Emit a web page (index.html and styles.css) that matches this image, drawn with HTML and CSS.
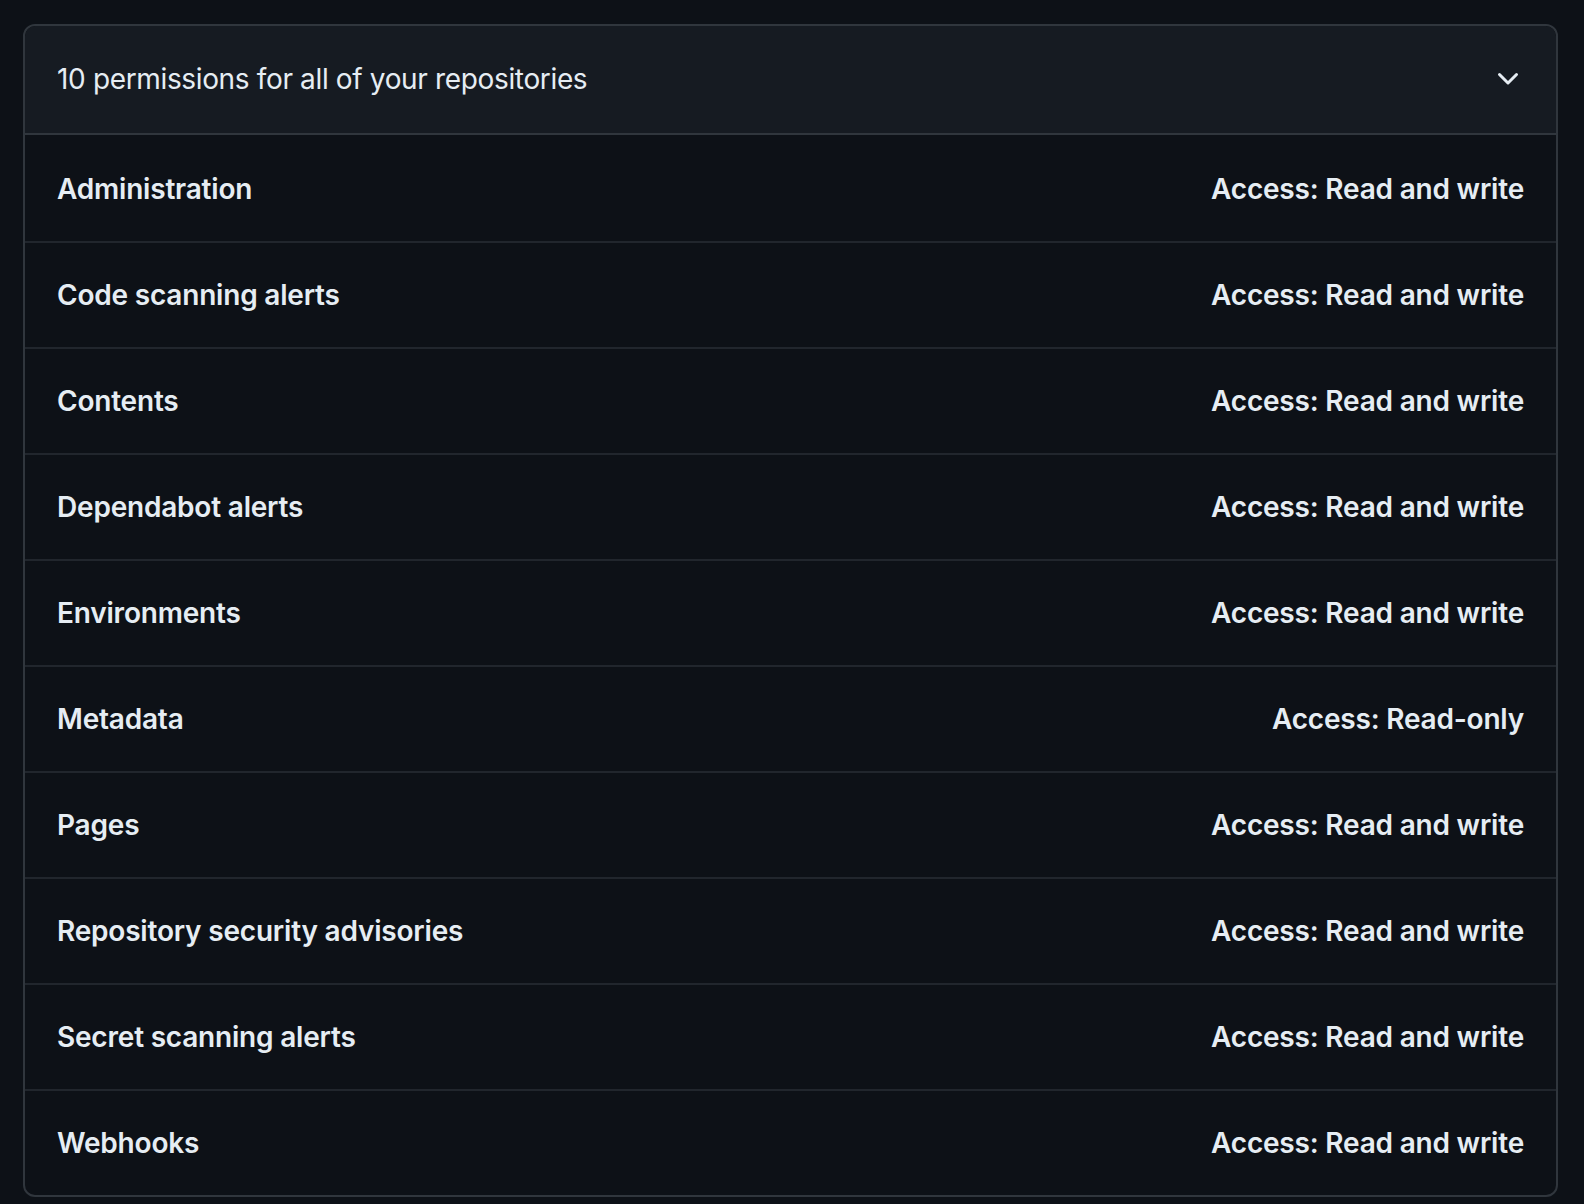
FILE: index.html
```html
<!DOCTYPE html>
<html lang="en">
<head>
<meta charset="utf-8">
<title>Permissions</title>
<link rel="stylesheet" href="styles.css">
</head>
<body>
<div class="box">
  <div class="box-header">
    <span class="header-title">10 permissions for all of your repositories</span>
    <svg class="chevron" viewBox="0 0 16 16" width="32" height="32" aria-hidden="true"><path fill="currentColor" d="M12.78 5.22a.749.749 0 0 1 0 1.06l-4.25 4.25a.749.749 0 0 1-1.06 0L3.22 6.28a.749.749 0 1 1 1.06-1.06L8 8.939l3.72-3.719a.749.749 0 0 1 1.06 0Z"/></svg>
  </div>
  <ul class="box-list">
    <li class="box-row"><span>Administration</span><span>Access: Read and write</span></li>
    <li class="box-row"><span>Code scanning alerts</span><span>Access: Read and write</span></li>
    <li class="box-row"><span>Contents</span><span>Access: Read and write</span></li>
    <li class="box-row"><span>Dependabot alerts</span><span>Access: Read and write</span></li>
    <li class="box-row"><span>Environments</span><span>Access: Read and write</span></li>
    <li class="box-row"><span>Metadata</span><span>Access: Read-only</span></li>
    <li class="box-row"><span>Pages</span><span>Access: Read and write</span></li>
    <li class="box-row"><span>Repository security advisories</span><span>Access: Read and write</span></li>
    <li class="box-row"><span>Secret scanning alerts</span><span>Access: Read and write</span></li>
    <li class="box-row"><span>Webhooks</span><span>Access: Read and write</span></li>
  </ul>
</div>
</body>
</html>
```

FILE: styles.css
```css
html, body {
  margin: 0;
  padding: 0;
  background: #0d1117;
}

body {
  padding: 24px 26px 0 23px;
  font-family: Inter, "Noto Sans", "Liberation Sans", sans-serif;
  color: #e6edf3;
}

.box {
  border: 2px solid #30363d;
  border-radius: 12px;
  overflow: hidden;
  background: #0d1117;
}

.box-header {
  display: flex;
  align-items: center;
  justify-content: space-between;
  padding: 32px 32px 33px;
  background: #161b22;
  border-bottom: 2px solid #30363d;
  border-radius: 10px 10px 0 0;
}

.header-title {
  font-size: 28px;
  line-height: 42px;
  font-weight: 400;
  letter-spacing: -0.35px;
}

.chevron {
  display: block;
  color: #e6edf3;
}

.box-list {
  list-style: none;
  margin: 0;
  padding: 0;
}

.box-row {
  display: flex;
  justify-content: space-between;
  align-items: center;
  padding: 32px;
  font-size: 28px;
  line-height: 40px;
  font-weight: 600;
  letter-spacing: -0.2px;
  border-top: 2px solid #21262d;
}

.box-row:first-child {
  border-top: none;
  padding-top: 34px;
}
```
